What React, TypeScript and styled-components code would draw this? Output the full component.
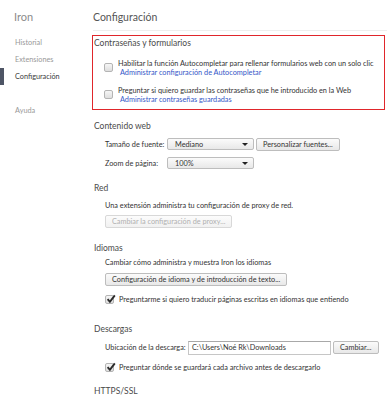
import React from "react";
import styled, { createGlobalStyle, css } from "styled-components";

const GlobalStyle = createGlobalStyle`
  html, body {
    margin: 0;
    padding: 0;
    background: #fff;
    overflow: hidden;
  }
  body {
    font-family: Lato, "Open Sans", sans-serif;
    color: #303942;
  }
`;

const Page = styled.div`
  display: flex;
  width: 387px;
  height: 400px;
  overflow: hidden;
`;

const Sidebar = styled.nav`
  width: 93px;
  flex-shrink: 0;
`;

const Brand = styled.div`
  height: 34px;
  box-sizing: border-box;
  padding: 10px 0 0 14px;
  font-size: 11px;
  line-height: 14px;
  color: #8c8c8c;
`;

const NavList = styled.ul`
  list-style: none;
  margin: 0;
  padding: 0;
`;

const NavItem = styled.li<{ $active?: boolean; $gap?: number }>`
  height: 17px;
  line-height: 17px;
  font-size: 7.3px;
  margin-top: ${(p) => p.$gap ?? 0}px;
  padding-left: ${(p) => (p.$active ? 11 : 15)}px;
  border-left: ${(p) => (p.$active ? "4px solid #4e5565" : "none")};
  color: ${(p) => (p.$active ? "#3a3a3a" : "#999")};
`;

const Main = styled.main`
  flex: 1;
  min-width: 0;
`;

const Header = styled.header`
  height: 31px;
  box-sizing: border-box;
  padding-top: 3px;
  display: flex;
  align-items: center;
  border-bottom: 1px solid #eee;
  font-size: 10.5px;
  color: #555;
`;

const Section = styled.section<{ $top: number; $boxed?: boolean }>`
  margin-top: ${(p) => p.$top}px;
  ${(p) =>
    p.$boxed &&
    css`
      border: 1px solid #e0262b;
      margin-left: -1px;
      margin-right: 2px;
      padding: 1px 0 5px 0;
    `}
`;

const SectionTitle = styled.h3`
  margin: 0;
  padding-left: 1px;
  font-weight: normal;
  font-size: 8.5px;
  line-height: 12px;
  color: #4a4a4a;
`;

const SectionBody = styled.div<{ $indent?: number }>`
  padding-left: ${(p) => p.$indent ?? 12}px;
`;

const OptionRow = styled.div<{ $mt: number; $h?: number }>`
  display: flex;
  align-items: center;
  gap: 5px;
  margin-top: ${(p) => p.$mt}px;
  min-height: ${(p) => p.$h ?? 0}px;
`;

const OptionText = styled.div`
  font-size: 7.3px;
  line-height: 9px;
  color: #333;
  white-space: nowrap;
`;

const Link = styled.a`
  display: block;
  margin-left: 2px;
  color: #3558c8;
  text-decoration: none;
`;

const Box = styled.span`
  width: 9px;
  height: 9px;
  box-sizing: border-box;
  flex-shrink: 0;
  border: 1px solid #b4b4b4;
  border-radius: 2px;
  background: linear-gradient(#f6f6f6, #dedede);
  position: relative;

  svg {
    position: absolute;
    left: 0px;
    top: -2px;
  }
`;

const Text = styled.div<{ $mt: number }>`
  margin-top: ${(p) => p.$mt}px;
  font-size: 7.3px;
  line-height: 10px;
  color: #333;
  white-space: nowrap;
`;

const FieldRow = styled.div<{ $mt: number; $h: number }>`
  display: flex;
  align-items: center;
  gap: 2px;
  height: ${(p) => p.$h}px;
  margin-top: ${(p) => p.$mt}px;
`;

const Label = styled.span<{ $w: number }>`
  width: ${(p) => p.$w}px;
  flex-shrink: 0;
  font-size: 7.3px;
  color: #333;
  white-space: nowrap;
`;

const Select = styled.div`
  width: 87px;
  height: 12px;
  box-sizing: border-box;
  display: flex;
  align-items: center;
  justify-content: space-between;
  padding: 0 5px 0 7px;
  border: 1px solid #bdbdbd;
  border-radius: 2px;
  background: linear-gradient(#fbfbfb, #e8e8e8);
  font-size: 7.3px;
  color: #333;
`;

const Arrow = styled.span`
  width: 0;
  height: 0;
  border-left: 3px solid transparent;
  border-right: 3px solid transparent;
  border-top: 3px solid #222;
`;

const Button = styled.button<{ $mt?: number }>`
  height: 13px;
  box-sizing: border-box;
  margin: ${(p) => p.$mt ?? 0}px 0 0 0;
  padding: 0 6px;
  display: flex;
  align-items: center;
  justify-content: center;
  border: 1px solid #bdbdbd;
  border-radius: 2px;
  background: linear-gradient(#fbfbfb, #e8e8e8);
  font-family: inherit;
  font-size: 7.3px;
  color: #333;
  white-space: nowrap;

  &:disabled {
    color: #b0b0b0;
    border-color: #d8d8d8;
    background: linear-gradient(#fcfcfc, #f1f1f1);
  }
`;

const PathInput = styled.div`
  width: 143px;
  height: 14px;
  box-sizing: border-box;
  display: flex;
  align-items: center;
  padding-left: 3px;
  border: 1px solid #c6c6c6;
  border-top-color: #a8a8a8;
  background: #fff;
  font-size: 7.3px;
  color: #333;
`;

const Checkbox = ({ checked }: { checked?: boolean }) => (
  <Box>
    {checked && (
      <svg width="10" height="10" viewBox="0 0 10 10">
        <path d="M1.6 5.2 L3.9 7.8 L8.8 1.4" fill="none" stroke="#2a2a2a" strokeWidth="1.9" />
      </svg>
    )}
  </Box>
);

export default function App() {
  return (
    <>
      <GlobalStyle />
      <Page>
        <Sidebar>
          <Brand>Iron</Brand>
          <NavList>
            <NavItem>Historial</NavItem>
            <NavItem>Extensiones</NavItem>
            <NavItem $active>Configuración</NavItem>
            <NavItem $gap={17}>Ayuda</NavItem>
          </NavList>
        </Sidebar>

        <Main>
          <Header>Configuración</Header>

          <Section $top={4} $boxed>
            <SectionTitle>Contraseñas y formularios</SectionTitle>
            <SectionBody $indent={11}>
              <OptionRow $mt={9.5}>
                <Checkbox />
                <OptionText>
                  Habilitar la función Autocompletar para rellenar formularios web con un solo clic
                  <Link href="#">Administrar configuración de Autocompletar</Link>
                </OptionText>
              </OptionRow>
              <OptionRow $mt={9}>
                <Checkbox />
                <OptionText>
                  Preguntar si quiero guardar las contraseñas que he introducido en la Web
                  <Link href="#">Administrar contraseñas guardadas</Link>
                </OptionText>
              </OptionRow>
            </SectionBody>
          </Section>

          <Section $top={10}>
            <SectionTitle>Contenido web</SectionTitle>
            <SectionBody>
              <FieldRow $mt={6} $h={13}>
                <Label $w={60}>Tamaño de fuente:</Label>
                <Select>
                  Mediano
                  <Arrow />
                </Select>
                <Button>Personalizar fuentes...</Button>
              </FieldRow>
              <FieldRow $mt={6} $h={13}>
                <Label $w={60}>Zoom de página:</Label>
                <Select>
                  100%
                  <Arrow />
                </Select>
              </FieldRow>
            </SectionBody>
          </Section>

          <Section $top={12}>
            <SectionTitle>Red</SectionTitle>
            <SectionBody>
              <Text $mt={7}>Una extensión administra tu configuración de proxy de red.</Text>
              <Button $mt={4} disabled>
                Cambiar la configuración de proxy...
              </Button>
            </SectionBody>
          </Section>

          <Section $top={14}>
            <SectionTitle>Idiomas</SectionTitle>
            <SectionBody>
              <Text $mt={4}>Cambiar cómo administra y muestra Iron los idiomas</Text>
              <Button $mt={5}>Configuración de idioma y de introducción de texto...</Button>
              <OptionRow $mt={7} $h={13}>
                <Checkbox checked />
                <OptionText>Preguntarme si quiero traducir páginas escritas en idiomas que entiendo</OptionText>
              </OptionRow>
            </SectionBody>
          </Section>

          <Section $top={17}>
            <SectionTitle>Descargas</SectionTitle>
            <SectionBody>
              <FieldRow $mt={6} $h={14}>
                <Label $w={81}>Ubicación de la descarga:</Label>
                <PathInput>C:\Users\Noé Rk\Downloads</PathInput>
                <Button>Cambiar...</Button>
              </FieldRow>
              <OptionRow $mt={7} $h={12}>
                <Checkbox checked />
                <OptionText>Preguntar dónde se guardará cada archivo antes de descargarlo</OptionText>
              </OptionRow>
            </SectionBody>
          </Section>

          <Section $top={11}>
            <SectionTitle>HTTPS/SSL</SectionTitle>
          </Section>
        </Main>
      </Page>
    </>
  );
}
